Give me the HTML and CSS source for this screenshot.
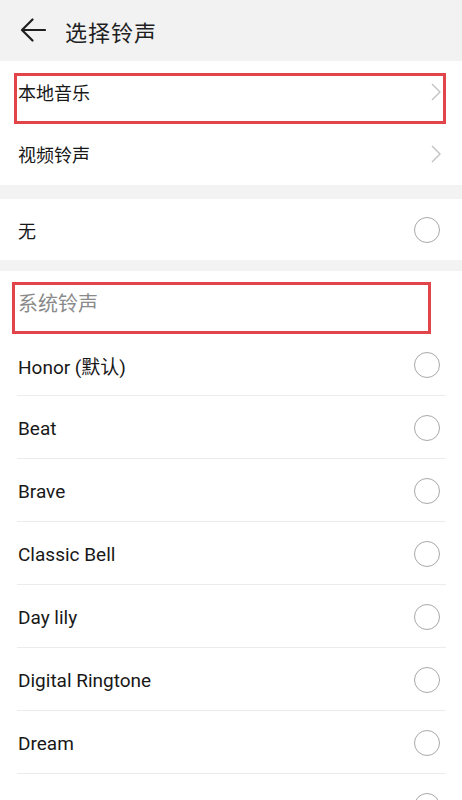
FILE: index.html
```html
<!DOCTYPE html>
<html lang="zh-CN">
<head>
    <meta charset="UTF-8">
    <meta name="viewport" content="width=device-width, initial-scale=1.0">
    <title>选择铃声</title>
    <link rel="stylesheet" href="styles.css">
</head>
<body>
    <header class="topbar">
        <svg class="back" width="26" height="26" viewBox="0 0 26 26">
            <path d="M2 13H25M2 13L12.5 2.5M2 13L12.5 23.5" fill="none" stroke="#1f1f1f" stroke-width="2.2" stroke-linecap="round"/>
        </svg>
        <h1>选择铃声</h1>
    </header>

    <section class="group">
        <div class="row link marked">
            <span class="label zh">本地音乐</span>
            <svg class="chevron" width="10" height="18" viewBox="0 0 10 18">
                <path d="M1 1L9 9L1 17" fill="none" stroke="#c2c2c2" stroke-width="1.4"/>
            </svg>
            <span class="mark mark-local"></span>
        </div>
        <div class="row link">
            <span class="label zh">视频铃声</span>
            <svg class="chevron" width="10" height="18" viewBox="0 0 10 18">
                <path d="M1 1L9 9L1 17" fill="none" stroke="#c2c2c2" stroke-width="1.4"/>
            </svg>
        </div>
    </section>

    <section class="group gap-lg">
        <div class="row none">
            <span class="label zh">无</span>
            <span class="radio"></span>
        </div>
    </section>

    <section class="group gap-sm">
        <div class="row subhead marked">
            <span class="label zh">系统铃声</span>
            <span class="mark mark-system"></span>
        </div>
        <div class="list">
            <div class="item"><span class="label">Honor (默认)</span><span class="radio"></span></div>
            <div class="item"><span class="label">Beat</span><span class="radio"></span></div>
            <div class="item"><span class="label">Brave</span><span class="radio"></span></div>
            <div class="item"><span class="label">Classic Bell</span><span class="radio"></span></div>
            <div class="item"><span class="label">Day lily</span><span class="radio"></span></div>
            <div class="item"><span class="label">Digital Ringtone</span><span class="radio"></span></div>
            <div class="item"><span class="label">Dream</span><span class="radio"></span></div>
            <div class="item"><span class="label">Fairy</span><span class="radio"></span></div>
        </div>
    </section>
</body>
</html>
```

FILE: styles.css
```css
body {
    margin: 0;
    background: #fff;
    font-family: Roboto, "Noto Sans CJK SC", sans-serif;
    color: #181818;
    overflow: hidden;
}

.topbar {
    height: 61px;
    background: #f2f2f2;
    display: flex;
    align-items: center;
    padding-left: 20px;
}

.back {
    margin-top: -2px;
}

.topbar h1 {
    margin: 0 0 0 19px;
    font-size: 22px;
    font-weight: 400;
    letter-spacing: 1px;
    color: #1f1f1f;
}

.group {
    background: #fff;
}

.gap-lg {
    border-top: 14px solid #f3f3f3;
}

.gap-sm {
    border-top: 11px solid #f3f3f3;
}

.row {
    position: relative;
    height: 62px;
    display: flex;
    align-items: center;
    justify-content: space-between;
    padding: 0 20px 0 18px;
}

.row.none {
    height: 61px;
    padding-right: 22px;
}

.label {
    font-size: 19px;
}

.label.zh {
    font-size: 18px;
}

.subhead .label.zh {
    font-size: 20px;
    color: #8a8a8a;
}

.chevron {
    margin-right: 1px;
}

.radio {
    width: 24px;
    height: 24px;
    border: 1.5px solid #a8a8a8;
    border-radius: 50%;
}

/* red annotation boxes */
.mark {
    position: absolute;
    border: 3px solid #e2444a;
    box-sizing: border-box;
}

.mark-local {
    top: 12px;
    left: 14px;
    width: 432px;
    height: 51px;
}

.mark-system {
    top: 11px;
    left: 12px;
    width: 419px;
    height: 52px;
}

.list {
    margin: 0 16px 0 17px;
}

.item {
    height: 62px;
    display: flex;
    align-items: center;
    justify-content: space-between;
    padding: 2px 6px 0 1px;
    box-sizing: border-box;
    height: 63px;
    border-bottom: 1px solid #ececec;
}
```
